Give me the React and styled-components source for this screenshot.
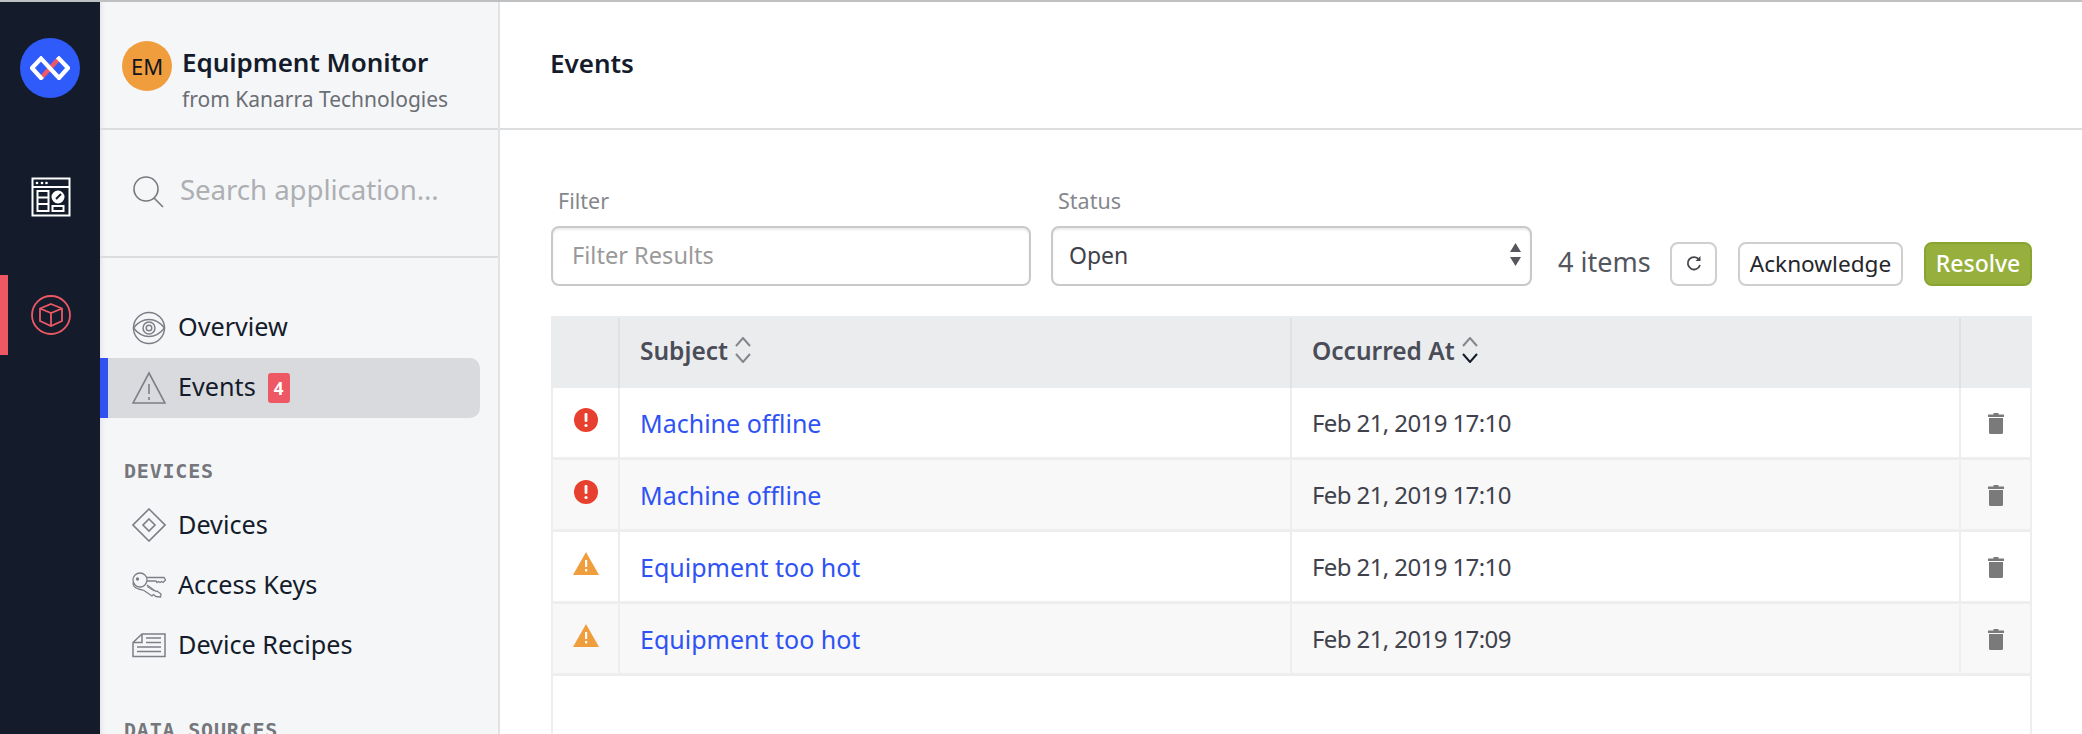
import React from "react";
import styled, { createGlobalStyle } from "styled-components";

const Global = createGlobalStyle`
  html, body { margin: 0; padding: 0; height: 734px; overflow: hidden; background: #fff; }
  #root { height: 734px; }
  * { box-sizing: border-box; }
  body { font-family: "Noto Sans", "Open Sans", sans-serif; }
`;

const Page = styled.div`
  display: flex; flex-direction: column; height: 734px; overflow: hidden;
  border-top: 2px solid #bfc0c2;
`;
const Shell = styled.div`display: flex; flex: 1; min-height: 0;`;
const Rail = styled.nav`
  width: 100px; flex: none; background: #141c2b;
  display: flex; flex-direction: column; align-items: center; padding-top: 36px;
`;
const RailLogo = styled.div`
  width: 60px; height: 60px; border-radius: 50%; background: #2f5bfa;
  display: flex; align-items: center; justify-content: center;
`;
const RailItem = styled.div`
  width: 100%; height: 80px; display: flex; align-items: center; justify-content: center;
  margin-top: ${p => p.$mt}px; padding-right: 6px;
  border-left: 8px solid ${p => (p.$active ? "#ee5865" : "transparent")};
`;
const Side = styled.aside`
  width: 400px; flex: none; background: #f5f6f8; border-right: 2px solid #e2e3e5;
  box-shadow: inset 6px 0 6px -6px rgba(0,0,0,.12);
  display: flex; flex-direction: column; overflow: hidden;
`;
const AppHead = styled.div`
  height: 128px; flex: none; border-bottom: 2px solid #dcdddf;
  display: flex; align-items: flex-start; padding: 39px 0 0 22px; gap: 10px;
`;
const Avatar = styled.div`
  width: 50px; height: 50px; border-radius: 50%; background: #f09d3e; color: #11151f;
  display: flex; align-items: center; justify-content: center; font-size: 22px; flex: none;
`;
const AppText = styled.div`display: flex; flex-direction: column; margin-top: 3px;`;
const AppName = styled.div`font-size: 26px; line-height: 36px; font-weight: 600; color: #141c2b; letter-spacing: -.05px; white-space: nowrap;`;
const AppFrom = styled.div`font-size: 21px; line-height: 32px; margin-top: 3px; color: #6b6e74; white-space: nowrap;`;
const SearchBox = styled.div`
  height: 128px; flex: none; border-bottom: 2px solid #dcdddf;
  display: flex; align-items: center; padding: 0 0 2px 32px; gap: 16px;
`;
const SearchText = styled.div`font-size: 27.7px; color: #adafb3; letter-spacing: -.1px; white-space: nowrap; margin-bottom: 6px;`;
const NavList = styled.div`display: flex; flex-direction: column; padding-top: 40px;`;
const NavRow = styled.div`
  height: 60px; flex: none; display: flex; align-items: center;
  padding-left: ${p => (p.$active ? 24 : 32)}px;
  border-left: ${p => (p.$active ? "8px solid #2f52f0" : "0")};
  background: ${p => (p.$active ? "#d9dadd" : "transparent")};
  border-radius: 0 10px 10px 0;
  width: 380px;
`;
const NavIcon = styled.span`width: 34px; height: 34px; display: flex; align-items: center; justify-content: center; flex: none; margin-right: 12px;`;
const NavLabel = styled.span`font-size: 25.2px; color: #141c2b; white-space: nowrap; margin-bottom: ${p => p.$mb || 3}px;`;
const Badge = styled.span`
  width: 22px; height: 30px; border-radius: 3px; background: #ee5865; color: #fff; margin-left: 12px;
  font-size: 17px; font-weight: 700; display: flex; align-items: center; justify-content: center;
`;
const SectionTitle = styled.div`
  font-family: "DejaVu Sans Mono", monospace; font-weight: 700; font-size: 20px; letter-spacing: .8px; color: #75777c;
  height: 24px; line-height: 24px; padding-left: 24px; margin-top: ${p => p.$mt}px; margin-bottom: ${p => p.$mb}px; white-space: nowrap;
`;

const Main = styled.main`flex: 1; min-width: 0; display: flex; flex-direction: column; background: #fff;`;
const MainHead = styled.header`
  height: 128px; flex: none; border-bottom: 2px solid #dcdddf; display: flex; align-items: center;
  padding: 0 0 4px 50px; font-size: 26px; font-weight: 600; color: #141c2b;
`;
const Content = styled.div`flex: 1; min-height: 0; display: flex; flex-direction: column; padding: 56px 50px 0 51px;`;
const Toolbar = styled.div`display: flex; align-items: flex-end; height: 100px; flex: none;`;
const Field = styled.label`display: flex; flex-direction: column; width: ${p => p.$w}px; margin-right: ${p => p.$mr}px;`;
const FieldLabel = styled.span`font-size: 21.5px; line-height: 30px; color: #85878c; padding-left: 7px; margin-bottom: 10px;`;
const InputBox = styled.div`
  height: 60px; border: 2px solid #c9c9c9; border-radius: 8px; background: #fff; box-shadow: inset 0 2px 2px rgba(0,0,0,.08);
  display: flex; align-items: center; justify-content: space-between; font-size: ${p => p.$fs}px;
  padding: 0 ${p => p.$pr}px 2px ${p => p.$pl}px; color: ${p => p.$c};
`;
const Count = styled.span`font-size: 27px; line-height: 44px; color: #53565e; margin: 0 19px 0 26px; width: 93px; flex: none; white-space: nowrap; padding-bottom: 2px;`;
const Btn = styled.div`
  height: 44px; width: ${p => p.$w}px; border-radius: 8px; margin-right: ${p => p.$mr}px; padding-bottom: 2px;
  display: flex; align-items: center; justify-content: center; font-size: ${p => p.$fs || 22.6}px; flex: none; white-space: nowrap;
  border: 2px solid ${p => (p.$primary ? "#88a532" : "#cfcfcf")};
  background: ${p => (p.$primary ? "#97b03d" : "#fff")};
  color: ${p => (p.$primary ? "#fff" : "#24262b")};
  font-weight: ${p => (p.$primary ? 500 : 400)};
`;
const Table = styled.div`
  margin-top: 30px; flex: 1; display: flex; flex-direction: column;
  border-left: 2px solid #eeeeef; border-right: 2px solid #eeeeef;
`;
const Cols = "67px 672px 669px 1fr";
const HeadRow = styled.div`
  display: grid; grid-template-columns: ${Cols}; height: 72px; background: #ebecee; margin: 0 -2px; padding: 2px 2px 0; flex: none;
`;
const HeadCell = styled.div`
  display: flex; align-items: center; gap: 6px; padding-left: 20px; font-size: 24.5px; font-weight: 600; color: #4a4d58;
  border-right: 2px solid #e0e1e3; white-space: nowrap; padding-bottom: 6px;
  &:last-child { border-right: 0; }
`;
const Row = styled.div`
  display: grid; grid-template-columns: ${Cols}; height: 72px; flex: none; border-bottom: 3px solid #eeeeee;
  background: ${p => (p.$odd ? "#f8f8f8" : "#fff")};
`;
const Cell = styled.div`
  display: flex; align-items: center; justify-content: ${p => (p.$center ? "center" : "flex-start")};
  padding-left: ${p => (p.$center ? 0 : 20)}px; font-size: 25px; color: #2f52f5;
  border-right: 2px solid #eeeeee; white-space: nowrap;
  &:last-child { border-right: 0; }
`;
const DateCell = styled(Cell)`
  font-size: 24px; letter-spacing: -.6px; color: #3f424b;
`;
const StatusIcon = styled.span`display: flex; margin-top: -6px;`;

const line = { fill: "none", stroke: "#7d7f87", strokeWidth: 2 };

const LogoMark = () => (
  <svg width="40" height="24" viewBox="0 0 40 24" fill="none">
    <path d="M11 22 L29 2.500" stroke="#ee5865" strokeWidth="4.400" />
    <path d="M12.500 20.500 L11 22 L2 12 L11 2.500 L29 22 L38 12 L27.500 1" stroke="#fff" strokeWidth="4.200" strokeLinejoin="miter" />
  </svg>
);
const DashIcon = () => (
  <svg width="40" height="40" viewBox="0 0 40 40" fill="none" stroke="#fff" strokeWidth="2">
    <rect x="1.500" y="1.500" width="37" height="37" />
    <path d="M2 10h36" />
    <circle cx="6" cy="6" r="1.300" fill="#fff" stroke="none" /><circle cx="11" cy="6" r="1.300" fill="#fff" stroke="none" /><circle cx="15.500" cy="6" r="1.300" fill="#fff" stroke="none" />
    <rect x="6.500" y="14" width="11" height="20" />
    <path d="M6.500 20.500h11M6.500 27h11" />
    <circle cx="27" cy="20" r="5.500" fill="#fff" />
    <path d="M25 22l5-5" stroke="#141c2b" strokeWidth="2" />
    <rect x="21.500" y="29" width="11" height="5" />
  </svg>
);
const BoxIcon = () => (
  <svg width="40" height="40" viewBox="0 0 40 40" fill="none" stroke="#ee5865" strokeWidth="1.800">
    <circle cx="20" cy="20" r="19" />
    <path d="M20 9l11 4.500v12.500l-11 5-11-5V13.500zM9 13.500l11 4.500 11-4.500M20 18v13" strokeLinejoin="miter" />
  </svg>
);
const SearchIcon = () => (
  <svg width="32" height="32" viewBox="0 0 32 32" fill="none" stroke="#77797e" strokeWidth="1.600">
    <circle cx="14" cy="13" r="12" /><path d="M22 22l9 9" />
  </svg>
);
const EyeIcon = () => (
  <svg width="34" height="34" viewBox="0 0 34 34" {...line} strokeWidth="1.500">
    <circle cx="17" cy="17" r="15.500" />
    <path d="M1.500 17C7 10 12 8.500 17 8.500S27 10 32.500 17C27 24 22 25.500 17 25.500S7 24 1.500 17z" />
    <circle cx="17" cy="17" r="6" /><circle cx="17" cy="17" r="2.800" />
  </svg>
);
const WarnIcon = () => (
  <svg width="34" height="34" viewBox="0 0 34 34" {...line} strokeWidth="1.600">
    <path d="M17 2L33 32H1z" />
    <path d="M17 13v10M17 26v3" />
  </svg>
);
const DiamondIcon = () => (
  <svg width="34" height="34" viewBox="0 0 34 34" {...line} strokeWidth="1.600">
    <path d="M17 1L33 17 17 33 1 17z" /><path d="M17 11l6 6-6 6-6-6z" />
  </svg>
);
const KeysIcon = () => (
  <svg width="34" height="26" viewBox="0 0 34 26" {...line} strokeWidth="1.300">
    <circle cx="8" cy="8" r="7" />
    <circle cx="5.500" cy="7" r="1.700" fill="#7d7f87" stroke="none" />
    <path d="M15 5.500h17l1.500 2.500-2.500 2.500-1.500-1-1.500 1-1.500-1-1.500 1-1-1.500H15" />
    <path d="M1 10.500C1 14 3 16 6.500 17c2 .5 4 1 5.500 1.500l8 5.500 1.500-1.500 2.500 2 4.500.5.500-3-4-3-1 .5-9-6.500" />
    <path d="M15 14.500l7 4.500" strokeWidth="1" />
  </svg>
);
const RecipeIcon = () => (
  <svg width="34" height="26" viewBox="0 0 34 26" {...line} strokeWidth="1.500">
    <path d="M10 2h23v22.500H1V10.500zM1 10.500h9V2" />
    <path d="M14 6h15M14 10.500h15M5 15h24M5 19.500h24" />
  </svg>
);
const RefreshIcon = () => (
  <svg width="16" height="18" viewBox="0 0 16 18" fill="none" stroke="#44464c" strokeWidth="1.800">
    <path d="M13 5.500A6.200 6.200 0 1 0 14 11" />
    <path d="M14.500 2v5h-5z" fill="#44464c" stroke="none" />
  </svg>
);
const Updown = () => (
  <svg width="11" height="24" viewBox="0 0 11 24" aria-hidden="true">
    <path d="M5.500 0L11 9H0z" fill="#55575c" />
    <path d="M0 14h11L5.500 23z" fill="#55575c" />
  </svg>
);
const Sort = ({ down }) => (
  <svg width="18" height="26" viewBox="0 0 18 26" fill="none" strokeWidth="2">
    <path d="M2 9l7-8 7 8" stroke="#85878c" />
    <path d="M2 17l7 8 7-8" stroke={down ? "#141c2b" : "#85878c"} />
  </svg>
);
const AlertIcon = () => (
  <svg width="24" height="24" viewBox="0 0 24 24">
    <circle cx="12" cy="12" r="12" fill="#e8402f" />
    <rect x="10.600" y="5" width="2.800" height="9" rx="1.200" fill="#fff" />
    <circle cx="12" cy="17.500" r="1.600" fill="#fff" />
  </svg>
);
const TriIcon = () => (
  <svg width="26" height="23" viewBox="0 0 26 23">
    <path d="M13 0L26 23H0z" fill="#f09d3e" />
    <rect x="12" y="8" width="2.200" height="7" fill="#fff" />
    <rect x="12" y="17" width="2.200" height="2.400" fill="#fff" />
  </svg>
);
const Trash = () => (
  <svg width="16" height="22" viewBox="0 0 16 22">
    <path d="M5.500 1h5v1.500H16V5H0V2.500h5.500z" fill="#7a7a7a" />
    <path d="M1 6h14v14.500a1.500 1.500 0 0 1-1.500 1.500h-11A1.500 1.500 0 0 1 1 20.500z" fill="#7a7a7a" />
  </svg>
);

const rows = [
  { icon: <AlertIcon />, subject: "Machine offline", at: "Feb 21, 2019 17:10" },
  { icon: <AlertIcon />, subject: "Machine offline", at: "Feb 21, 2019 17:10" },
  { icon: <TriIcon />, subject: "Equipment too hot", at: "Feb 21, 2019 17:10" },
  { icon: <TriIcon />, subject: "Equipment too hot", at: "Feb 21, 2019 17:09" },
];

export default function App() {
  return (
    <Page>
      <Global />
      <Shell>
        <Rail>
          <RailLogo><LogoMark /></RailLogo>
          <RailItem $mt={59}><DashIcon /></RailItem>
          <RailItem $mt={38} $active><BoxIcon /></RailItem>
        </Rail>
        <Side>
          <AppHead>
            <Avatar>EM</Avatar>
            <AppText>
              <AppName>Equipment Monitor</AppName>
              <AppFrom>from Kanarra Technologies</AppFrom>
            </AppText>
          </AppHead>
          <SearchBox>
            <SearchIcon />
            <SearchText>Search application...</SearchText>
          </SearchBox>
          <NavList>
            <NavRow><NavIcon><EyeIcon /></NavIcon><NavLabel $mb={5}>Overview</NavLabel></NavRow>
            <NavRow $active><NavIcon><WarnIcon /></NavIcon><NavLabel $mb={5}>Events</NavLabel><Badge>4</Badge></NavRow>
            <SectionTitle $mt={41} $mb={12}>DEVICES</SectionTitle>
            <NavRow><NavIcon><DiamondIcon /></NavIcon><NavLabel>Devices</NavLabel></NavRow>
            <NavRow><NavIcon><KeysIcon /></NavIcon><NavLabel>Access Keys</NavLabel></NavRow>
            <NavRow><NavIcon><RecipeIcon /></NavIcon><NavLabel>Device Recipes</NavLabel></NavRow>
            <SectionTitle $mt={43} $mb={0}>DATA SOURCES</SectionTitle>
          </NavList>
        </Side>
        <Main>
          <MainHead>Events</MainHead>
          <Content>
            <Toolbar>
              <Field $w={480} $mr={20}>
                <FieldLabel>Filter</FieldLabel>
                <InputBox $pl={19} $pr={12} $fs={23.6} $c="#9a9a9a">Filter Results</InputBox>
              </Field>
              <Field $w={481} $mr={0}>
                <FieldLabel>Status</FieldLabel>
                <InputBox $pl={16} $pr={9} $fs={23} $c="#3f424b">Open<Updown /></InputBox>
              </Field>
              <Count>4 items</Count>
              <Btn $w={47} $mr={21}><RefreshIcon /></Btn>
              <Btn $w={165} $mr={21}>Acknowledge</Btn>
              <Btn $w={108} $mr={0} $fs={23} $primary>Resolve</Btn>
            </Toolbar>
            <Table>
              <HeadRow>
                <HeadCell />
                <HeadCell>Subject <Sort /></HeadCell>
                <HeadCell>Occurred At <Sort down /></HeadCell>
                <HeadCell />
              </HeadRow>
              {rows.map((r, i) => (
                <Row key={i} $odd={i % 2 === 1}>
                  <Cell $center><StatusIcon>{r.icon}</StatusIcon></Cell>
                  <Cell>{r.subject}</Cell>
                  <DateCell>{r.at}</DateCell>
                  <Cell $center><Trash /></Cell>
                </Row>
              ))}
            </Table>
          </Content>
        </Main>
      </Shell>
    </Page>
  );
}
